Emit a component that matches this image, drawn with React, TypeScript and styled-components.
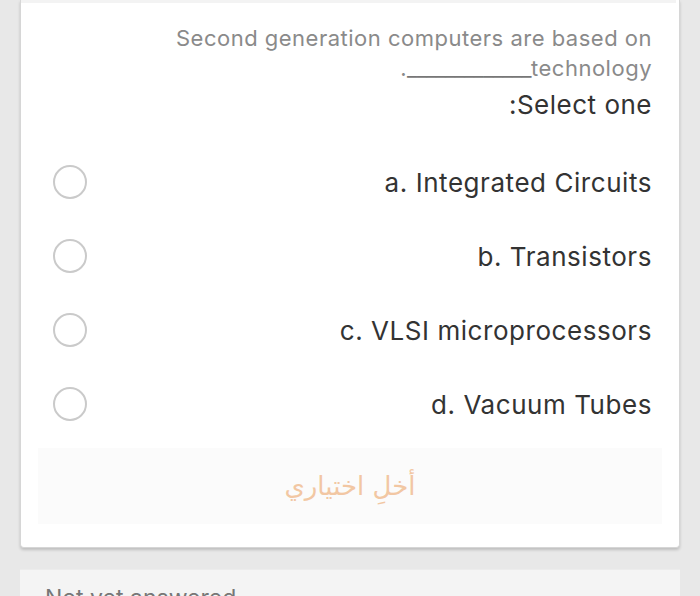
import styled, { createGlobalStyle } from "styled-components";

const GlobalStyle = createGlobalStyle`
  html, body {
    margin: 0;
    padding: 0;
    background: #e8e8e8;
    font-family: Inter, "Liberation Sans", sans-serif;
    overflow: hidden;
  }
`;

const options = [
  "a. Integrated Circuits",
  "b. Transistors",
  "c. VLSI microprocessors",
  "d. Vacuum Tubes",
];

export default function App() {
  return (
    <>
      <GlobalStyle />
      <Page>
        <Card>
          <TopStrip />
          <Question dir="rtl">
            <QuestionLine>Second generation computers are based on</QuestionLine>
            <QuestionLine>
              <bdi dir="ltr">
                <Blank>_____________</Blank>technology
              </bdi>
              .
            </QuestionLine>
            <Prompt>Select one:</Prompt>
          </Question>
          <OptionList>
            {options.map((label) => (
              <OptionRow key={label}>
                <Radio />
                <OptionLabel>{label}</OptionLabel>
              </OptionRow>
            ))}
          </OptionList>
          <ClearBox>
            <ClearLink dir="rtl">أخلِ اختياري</ClearLink>
          </ClearBox>
        </Card>
        <StatusCard>
          <StatusText>Not yet answered</StatusText>
        </StatusCard>
      </Page>
    </>
  );
}

const Page = styled.div`
  padding: 0 20px;
  height: 596px;
  box-sizing: border-box;
  overflow: hidden;
`;

const Card = styled.div`
  background: #fff;
  border: 1px solid #d6d6d6;
  border-top: none;
  border-radius: 0 0 4px 4px;
  box-shadow: 0 2px 3px rgba(0, 0, 0, 0.18);
  padding-bottom: 23px;
`;

const TopStrip = styled.div`
  height: 3px;
  margin: 0 3px 0 0;
  background: #f3f3f3;
`;

const Question = styled.div`
  padding: 20px 27px 0 27px;
  text-align: right;
`;

const QuestionLine = styled.div`
  font-size: 22px;
  line-height: 30px;
  letter-spacing: 0.5px;
  color: #8a8a8a;
`;

const Blank = styled.span`
  letter-spacing: -0.5px;
  color: #777;
`;

const Prompt = styled.div`
  margin-top: 5px;
  font-size: 26px;
  line-height: 34px;
  letter-spacing: 0.5px;
  color: #333;
`;

const OptionList = styled.div`
  margin-top: 23px;
  display: flex;
  flex-direction: column;
`;

const OptionRow = styled.div`
  height: 74px;
  display: flex;
  align-items: center;
  justify-content: space-between;
  padding: 0 27px 0 32px;
`;

const Radio = styled.span`
  width: 30px;
  height: 30px;
  border: 2px solid #cacaca;
  border-radius: 50%;
  background: #fff;
`;

const OptionLabel = styled.span`
  font-size: 26px;
  letter-spacing: 0.55px;
  color: #333;
`;

const ClearBox = styled.div`
  margin: 7px 17px 0;
  height: 76px;
  background: #fbfbfb;
  display: flex;
  align-items: center;
  justify-content: center;
`;

const ClearLink = styled.span`
  font-family: "DejaVu Sans", "Noto Sans", sans-serif;
  font-size: 26px;
  color: #f2c7a3;
`;

const StatusCard = styled.div`
  margin-top: 21px;
  background: #f4f4f4;
  border-top: 1px solid #ececec;
  height: 60px;
  padding: 14px 25px;
`;

const StatusText = styled.div`
  font-size: 23px;
  color: #777;
`;
